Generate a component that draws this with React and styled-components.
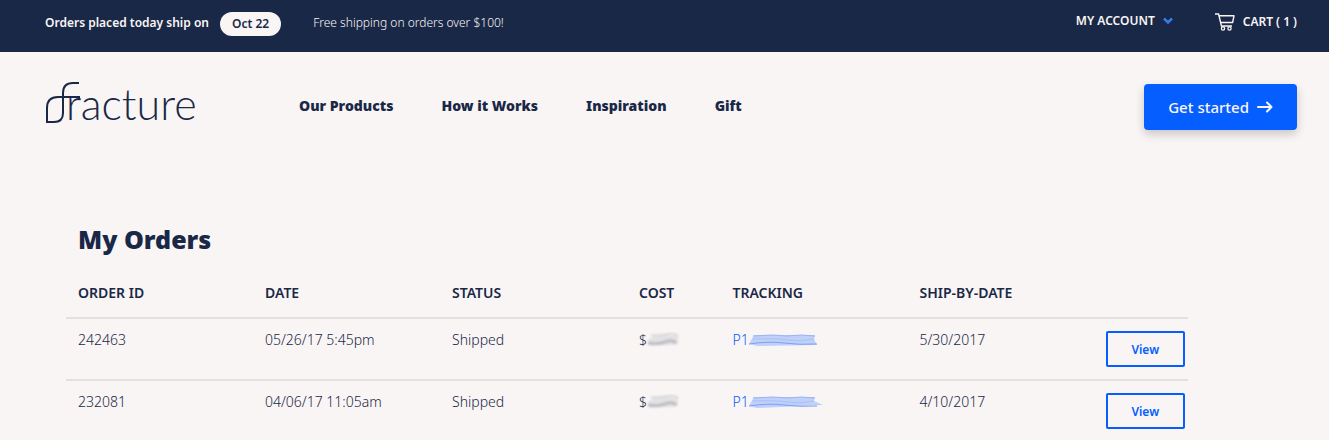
import styled, { createGlobalStyle } from 'styled-components';

const theme = {
    navy: '#1a2847',
    cream: '#f9f5f4',
    blue: '#055eff',
    line: '#e4e0df',
    body: '"Noto Sans", "Open Sans", sans-serif',
};

const GlobalStyle = createGlobalStyle`
    *,
    *::before,
    *::after {
        box-sizing: border-box;
    }

    body {
        margin: 0;
        background: ${theme.cream};
        color: ${theme.navy};
        font-family: ${theme.body};
        font-size: 14px;
        line-height: 20px;
    }
`;

const TopBar = styled.div`
    display: flex;
    align-items: flex-start;
    min-height: 52px;
    padding: 12px 32px 0 45px;
    background: ${theme.navy};
    color: ${theme.cream};
    font-size: 12px;
    line-height: 22px;
`;

const ShipNote = styled.div`
    display: flex;
    align-items: flex-start;
    gap: 11px;
    font-weight: 600;
`;

const DatePill = styled.span`
    padding: 1px 12px;
    border-radius: 12px;
    background: ${theme.cream};
    color: ${theme.navy};
`;

const FreeShipping = styled.span`
    margin-left: 32px;
    font-weight: 350;
`;

const AccountNav = styled.nav`
    display: flex;
    gap: 42px;
    margin-left: auto;
`;

const AccountButton = styled.button`
    display: flex;
    align-items: center;
    gap: 8px;
    height: 18px;
    padding: 0;
    border: 0;
    background: none;
    color: inherit;
    font: inherit;
    font-weight: 600;
    cursor: pointer;
`;

const CartLink = styled.a`
    display: flex;
    align-items: center;
    gap: 8px;
    height: 20px;
    color: inherit;
    font-weight: 600;
    text-decoration: none;
`;

const Header = styled.header`
    display: flex;
    align-items: flex-start;
    padding: 24px 32px 0 45px;
`;

const LogoLink = styled.a`
    display: flex;
    width: 152px;
    color: ${theme.navy};
`;

const MainNav = styled.nav`
    display: flex;
    gap: 48px;
    margin: 20px 0 0 102px;
`;

const NavLink = styled.a`
    color: ${theme.navy};
    font-size: 14px;
    font-weight: 900;
    text-decoration: none;
`;

const GetStarted = styled.a`
    display: flex;
    align-items: center;
    gap: 8px;
    margin: 8px 0 0 auto;
    padding: 11px 24px;
    border-radius: 4px;
    background: ${theme.blue};
    color: ${theme.cream};
    box-shadow: 0 4px 10px rgba(0, 0, 0, 0.2);
    font-size: 15px;
    font-weight: 500;
    line-height: 24px;
    text-decoration: none;
`;

const Orders = styled.main`
    padding: 89px 141px 0 66px;
`;

const Title = styled.h1`
    margin: 0 0 26px;
    padding-left: 12px;
    font-size: 25px;
    font-weight: 900;
    line-height: 36px;
`;

const OrderTable = styled.table`
    width: 100%;
    border-spacing: 0;
    table-layout: fixed;
    text-align: left;
`;

const HeadCell = styled.th`
    width: ${({ $cols }) => `calc(100% * ${$cols} / 12)`};
    padding: 0 12px 14px;
    font-weight: 600;
`;

const Cell = styled.td`
    padding: ${({ $action }) => ($action ? '12px 3px 12px 11px' : '11px 12px')};
    border-top: 2px solid ${theme.line};
    font-weight: 350;
    vertical-align: top;
    white-space: nowrap;
`;

const Amount = styled.span`
    display: flex;
    align-items: center;
`;

const TrackingLink = styled.a`
    display: flex;
    align-items: center;
    color: ${theme.blue};
    text-decoration: none;
`;

const ViewButton = styled.button`
    display: block;
    width: 100%;
    height: 36px;
    padding: 0;
    border: 2px solid ${theme.blue};
    border-radius: 2px;
    background: none;
    color: ${theme.blue};
    font-family: inherit;
    font-size: 12px;
    font-weight: 600;
    cursor: pointer;
`;

const Logo = () => (
    <svg width="152" height="56" viewBox="0 -6 152 56" fill="none" role="img" aria-label="fracture">
        <path
            d="M34 1H28Q18 1 18 11V31Q18 40 9 40H2V26Q2 15 13 15H35"
            stroke="currentColor"
            strokeWidth="2"
        />
        <text x="21" y="38" fill="currentColor" fontFamily="Lato, sans-serif" fontSize="43" fontWeight="300">
            racture
        </text>
    </svg>
);

const Chevron = () => (
    <svg width="10" height="8" viewBox="0 0 10 8" fill="none" aria-hidden="true">
        <path d="M1 1.5L5 5.5L9 1.5" stroke="#3779e8" strokeWidth="2.6" />
    </svg>
);

const Cart = () => (
    <svg width="20" height="18" viewBox="0 0 20 18" fill="none" stroke="currentColor" aria-hidden="true">
        <path d="M0 1H3.6L6.4 13H17M4 2.8H19L17.6 9.5H5.6" strokeWidth="1.4" strokeLinejoin="round" />
        <circle cx="8" cy="15.5" r="1.6" strokeWidth="1.3" />
        <circle cx="14.5" cy="15.5" r="1.6" strokeWidth="1.3" />
    </svg>
);

const Arrow = () => (
    <svg width="16" height="12" viewBox="0 0 16 12" fill="none" aria-hidden="true">
        <path
            d="M1 6H14.5M10 1.5L14.5 6L10 10.5"
            stroke="currentColor"
            strokeWidth="2"
            strokeLinecap="round"
            strokeLinejoin="round"
        />
    </svg>
);

const CostSmudge = () => (
    <svg width="34" height="16" viewBox="0 0 34 16" fill="none" aria-hidden="true">
        <defs>
            <filter id="soft" x="-10%" y="-40%" width="120%" height="180%">
                <feGaussianBlur stdDeviation="1" />
            </filter>
        </defs>
        <g filter="url(#soft)">
            <path d="M1 8Q0 13 6 13H27L31 12V3L8 3Z" fill="#e2e1e3" />
            <path d="M1 11Q10 13 18 10T29 11" stroke="#bcbdc4" strokeWidth="3" />
            <path d="M4 3Q13 4 20 2T31 4" stroke="#d2d2d6" strokeWidth="1.5" />
        </g>
    </svg>
);

const TrackingSmudge = ({ long }) => (
    <svg width="76" height="16" viewBox="0 0 76 16" fill="none" aria-hidden="true">
        <defs>
            <filter id="streak" x="-5%" y="-20%" width="110%" height="140%">
                <feGaussianBlur stdDeviation="0.7" />
            </filter>
        </defs>
        <g filter="url(#streak)">
            <path d={`M0 12L5 3H66L65 7L${long ? '74 11' : '68 13'}L8 14Z`} fill="#bfd0f9" />
            <path d="M4 4L24 3L38 4L52 3L66 4" stroke="#98b3f7" strokeWidth="1" />
            <path d="M4 7Q24 6 38 8T65 7" stroke="#aac0f8" strokeWidth="1" />
            <path d="M0 12Q20 9 35 11T68 12" stroke="#7c9ff8" strokeWidth="1" />
        </g>
    </svg>
);

const orders = [
    { id: '242463', date: '05/26/17 5:45pm', shipBy: '5/30/2017' },
    { id: '232081', date: '04/06/17 11:05am', shipBy: '4/10/2017', long: true },
];

const App = () => {
    return (
        <>
            <GlobalStyle />
            <TopBar>
                <ShipNote>
                    Orders placed today ship on <DatePill>Oct 22</DatePill>
                </ShipNote>
                <FreeShipping>Free shipping on orders over $100!</FreeShipping>
                <AccountNav>
                    <AccountButton type="button">
                        MY ACCOUNT <Chevron />
                    </AccountButton>
                    <CartLink href="#cart">
                        <Cart /> CART ( 1 )
                    </CartLink>
                </AccountNav>
            </TopBar>
            <Header>
                <LogoLink href="#home">
                    <Logo />
                </LogoLink>
                <MainNav>
                    <NavLink href="#products">Our Products</NavLink>
                    <NavLink href="#how">How it Works</NavLink>
                    <NavLink href="#inspiration">Inspiration</NavLink>
                    <NavLink href="#gift">Gift</NavLink>
                </MainNav>
                <GetStarted href="#start">
                    Get started <Arrow />
                </GetStarted>
            </Header>
            <Orders>
                <Title>My Orders</Title>
                <OrderTable>
                    <thead>
                        <tr>
                            <HeadCell $cols={2}>ORDER ID</HeadCell>
                            <HeadCell $cols={2}>DATE</HeadCell>
                            <HeadCell $cols={2}>STATUS</HeadCell>
                            <HeadCell $cols={1}>COST</HeadCell>
                            <HeadCell $cols={2}>TRACKING</HeadCell>
                            <HeadCell $cols={2}>SHIP-BY-DATE</HeadCell>
                            <HeadCell $cols={1} />
                        </tr>
                    </thead>
                    <tbody>
                        {orders.map(({ id, date, shipBy, long }) => (
                            <tr key={id}>
                                <Cell>{id}</Cell>
                                <Cell>{date}</Cell>
                                <Cell>Shipped</Cell>
                                <Cell>
                                    <Amount>
                                        $<CostSmudge />
                                    </Amount>
                                </Cell>
                                <Cell>
                                    <TrackingLink href="#tracking">
                                        P1
                                        <TrackingSmudge long={long} />
                                    </TrackingLink>
                                </Cell>
                                <Cell>{shipBy}</Cell>
                                <Cell $action>
                                    <ViewButton type="button">View</ViewButton>
                                </Cell>
                            </tr>
                        ))}
                    </tbody>
                </OrderTable>
            </Orders>
        </>
    );
};

export default App;
